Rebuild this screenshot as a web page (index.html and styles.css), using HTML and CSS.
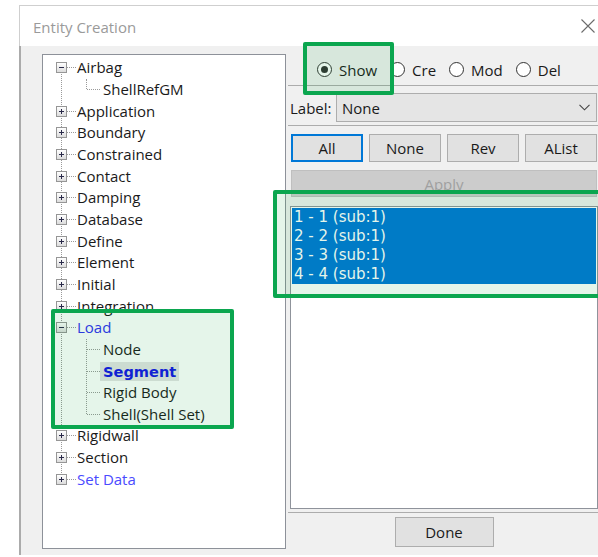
FILE: index.html
```html
<!DOCTYPE html>
<html lang="en">
<head>
<meta charset="utf-8">
<title>Entity Creation</title>
<link rel="stylesheet" href="styles.css">
</head>
<body>
<div class="window">
  <div class="titlebar">
    <span class="title">Entity Creation</span>
    <svg class="close" width="14" height="14" viewBox="0 0 14 14" aria-label="Close">
      <path d="M0.5 0.5 L13.5 13.5 M13.5 0.5 L0.5 13.5" stroke="#6b6b6b" stroke-width="1.1" fill="none"/>
    </svg>
  </div>
  <div class="client">
    <div class="tree">
      <ul class="root">
        <li>
          <div class="row"><span class="exp"></span><span class="dash"></span><span class="lbl">Airbag</span></div>
          <ul class="kids">
            <li><div class="row child"><span class="dash"></span><span class="lbl">ShellRefGM</span></div></li>
          </ul>
        </li>
        <li><div class="row"><span class="exp plus"></span><span class="dash"></span><span class="lbl">Application</span></div></li>
        <li><div class="row"><span class="exp plus"></span><span class="dash"></span><span class="lbl">Boundary</span></div></li>
        <li><div class="row"><span class="exp plus"></span><span class="dash"></span><span class="lbl">Constrained</span></div></li>
        <li><div class="row"><span class="exp plus"></span><span class="dash"></span><span class="lbl">Contact</span></div></li>
        <li><div class="row"><span class="exp plus"></span><span class="dash"></span><span class="lbl">Damping</span></div></li>
        <li><div class="row"><span class="exp plus"></span><span class="dash"></span><span class="lbl">Database</span></div></li>
        <li><div class="row"><span class="exp plus"></span><span class="dash"></span><span class="lbl">Define</span></div></li>
        <li><div class="row"><span class="exp plus"></span><span class="dash"></span><span class="lbl">Element</span></div></li>
        <li><div class="row"><span class="exp plus"></span><span class="dash"></span><span class="lbl">Initial</span></div></li>
        <li><div class="row"><span class="exp plus"></span><span class="dash"></span><span class="lbl">Integration</span></div></li>
        <li>
          <div class="row"><span class="exp"></span><span class="dash"></span><span class="lbl blue">Load</span></div>
          <ul class="kids">
            <li><div class="row child"><span class="dash"></span><span class="lbl">Node</span></div></li>
            <li><div class="row child"><span class="dash"></span><span class="lbl current">Segment</span></div></li>
            <li><div class="row child"><span class="dash"></span><span class="lbl">Rigid Body</span></div></li>
            <li><div class="row child"><span class="dash"></span><span class="lbl">Shell(Shell Set)</span></div></li>
          </ul>
        </li>
        <li><div class="row"><span class="exp plus"></span><span class="dash"></span><span class="lbl">Rigidwall</span></div></li>
        <li><div class="row"><span class="exp plus"></span><span class="dash"></span><span class="lbl">Section</span></div></li>
        <li><div class="row"><span class="exp plus"></span><span class="dash"></span><span class="lbl blue-light">Set Data</span></div></li>
      </ul>
    </div>

    <div class="panel">
      <div class="modes">
        <label class="radio on"><span class="circle"></span>Show</label>
        <label class="radio"><span class="circle"></span>Cre</label>
        <label class="radio"><span class="circle"></span>Mod</label>
        <label class="radio"><span class="circle"></span>Del</label>
      </div>
      <div class="label-row">
        <span class="label-text">Label:</span>
        <div class="combo">
          <span>None</span>
          <svg width="11" height="7" viewBox="0 0 11 7"><path d="M0.5 0.8 L5.5 5.8 L10.5 0.8" stroke="#444" stroke-width="1.1" fill="none"/></svg>
        </div>
      </div>
      <div class="sep"></div>
      <div class="btns">
        <button class="btn default">All</button>
        <button class="btn">None</button>
        <button class="btn">Rev</button>
        <button class="btn">AList</button>
      </div>
      <button class="btn apply" disabled>Apply</button>
      <div class="list">
        <div class="item">1 - 1 (sub:1)</div>
        <div class="item">2 - 2 (sub:1)</div>
        <div class="item">3 - 3 (sub:1)</div>
        <div class="item">4 - 4 (sub:1)</div>
      </div>
      <div class="sep"></div>
      <div class="footer">
        <button class="btn done">Done</button>
      </div>
    </div>
  </div>
</div>

<!-- highlight frames drawn over the dialog -->
<div class="mark mark-show"></div>
<div class="mark mark-list"></div>
<div class="mark mark-tree"></div>
</body>
</html>
```

FILE: styles.css
```css
html, body {
  margin: 0;
  padding: 0;
  overflow: hidden;
  background: #ffffff;
}

body {
  position: relative;
  width: 598px;
  height: 557px;
  font-family: "Open Sans", "Noto Sans", sans-serif;
  font-size: 15px;
  color: #1a1a1a;
}

/* dialog frame */
.window {
  margin: 5px 0 0 19px;
  width: 579px;
}

.titlebar {
  height: 40px;
  border-top: 1px solid #cfcfcf;
  border-left: 1px solid #cfcfcf;
  background: #ffffff;
  display: flex;
  align-items: center;
  justify-content: space-between;
  padding-left: 13px;
}

.title {
  color: #9a9a9a;
  margin-top: 2px;
}

.close {
  margin-right: 3px;
  display: block;
}

.client {
  height: 509px;
  box-sizing: border-box;
  border-left: 2px solid #ababab;
  background: #f0f0f0;
  padding: 8px 0 0 21px;
  display: flex;
  align-items: flex-start;
}

/* tree view */
.tree {
  width: 244px;
  height: 495px;
  box-sizing: border-box;
  border: 1px solid #8d9199;
  background: #ffffff;
  padding-top: 2px;
}

.tree ul {
  list-style: none;
  margin: 0;
  padding: 0;
  position: relative;
}

.root {
  padding-left: 13px !important;
}

.root::before {
  content: "";
  position: absolute;
  left: 18px;
  top: 11px;
  bottom: 11px;
  border-left: 1px dotted #9a9a9a;
}

.kids::before {
  content: "";
  position: absolute;
  left: 30px;
  top: 0;
  bottom: 11px;
  border-left: 1px dotted #9a9a9a;
}

.row {
  height: 21.667px;
  display: flex;
  align-items: center;
  white-space: nowrap;
}

.exp {
  position: relative;
  width: 11px;
  height: 11px;
  box-sizing: border-box;
  border: 1px solid #969696;
  background: linear-gradient(#ffffff, #dcdcdc);
  flex: none;
}

.exp::before {
  content: "";
  position: absolute;
  left: 2px;
  top: 4px;
  width: 5px;
  height: 1px;
  background: #2a2a4a;
}

.exp.plus::after {
  content: "";
  position: absolute;
  left: 4px;
  top: 2px;
  width: 1px;
  height: 5px;
  background: #2a2a4a;
}

.dash {
  width: 9px;
  border-top: 1px dotted #9a9a9a;
  flex: none;
}

.row .lbl {
  line-height: 19px;
  margin-left: 1px;
}

.child {
  padding-left: 31px;
}

.child .dash {
  width: 13px;
}

.child .lbl {
  margin-left: 0;
  padding: 0 3px;
}

.blue {
  color: #3030f2;
}

.blue-light {
  color: #4a4aff;
}

.current {
  font-family: "DejaVu Sans", sans-serif;
  font-weight: bold;
  font-size: 14.6px;
  color: #1414e6;
  background: #e4e4e4;
}

/* right-hand controls */
.panel {
  width: 312px;
  box-sizing: border-box;
  padding-left: 4px;
  display: flex;
  flex-direction: column;
}

.modes {
  height: 31px;
  margin-left: -2px;
  padding-left: 29px;
  border-bottom: 1px solid #acacac;
  display: flex;
  align-items: center;
  gap: 13px;
}

.radio {
  display: flex;
  align-items: center;
  gap: 7px;
}

.circle {
  width: 15px;
  height: 15px;
  box-sizing: border-box;
  border: 1px solid #333333;
  border-radius: 50%;
  background: #ffffff;
  position: relative;
}

.radio.on .circle::after {
  content: "";
  position: absolute;
  left: 3px;
  top: 3px;
  width: 7px;
  height: 7px;
  border-radius: 50%;
  background: #333333;
}

.label-row {
  margin-top: 7px;
  display: flex;
  align-items: center;
}

.label-text {
  width: 46px;
}

.combo {
  flex: 1;
  margin-right: 1px;
  height: 29px;
  box-sizing: border-box;
  border: 1px solid #adadad;
  background: #e5e5e5;
  display: flex;
  align-items: center;
  justify-content: space-between;
  padding: 0 6px 0 5px;
}

.sep {
  margin: 3px 0 0 -2px;
  border-top: 1px solid #acacac;
}

.btns {
  margin: 8px 1px 0 1px;
  display: grid;
  grid-template-columns: repeat(4, 1fr);
  gap: 6px;
}

.btn {
  font-family: "Open Sans", "Noto Sans", sans-serif;
  font-size: 15px;
  color: #1a1a1a;
  height: 28px;
  box-sizing: border-box;
  border: 1px solid #adadad;
  background: #e1e1e1;
  padding: 0;
  border-radius: 0;
}

.btn.default {
  border: 2px solid #0078d7;
}

.apply {
  margin: 8px 1px 0 1px;
  height: 27px;
  background: #cccccc;
  border-color: #bfbfbf;
  color: #a0a0a0;
}

.list {
  margin-top: 9px;
  height: 303px;
  box-sizing: border-box;
  border: 1px solid #8f939b;
  background: #ffffff;
  padding: 1px;
}

.item {
  height: 19px;
  line-height: 19px;
  background: #0078d7;
  color: #ffffff;
  font-family: "DejaVu Sans", sans-serif;
  font-size: 15px;
  padding-left: 2px;
}

.panel .sep:last-of-type {
  margin-top: 4px;
}

.footer {
  margin-top: 4px;
  display: flex;
  justify-content: center;
}

.done {
  width: 99px;
  height: 30px;
}

/* green highlight frames */
.mark {
  position: absolute;
  box-sizing: border-box;
  border: 4px solid #0ba64f;
  border-radius: 2px;
  background: rgba(0, 155, 45, 0.1);
}

.mark-show {
  left: 303px;
  top: 42px;
  width: 91px;
  height: 53px;
}

.mark-list {
  left: 273px;
  top: 190px;
  width: 340px;
  height: 108px;
}

.mark-tree {
  left: 51px;
  top: 309px;
  width: 183px;
  height: 120px;
}
```
